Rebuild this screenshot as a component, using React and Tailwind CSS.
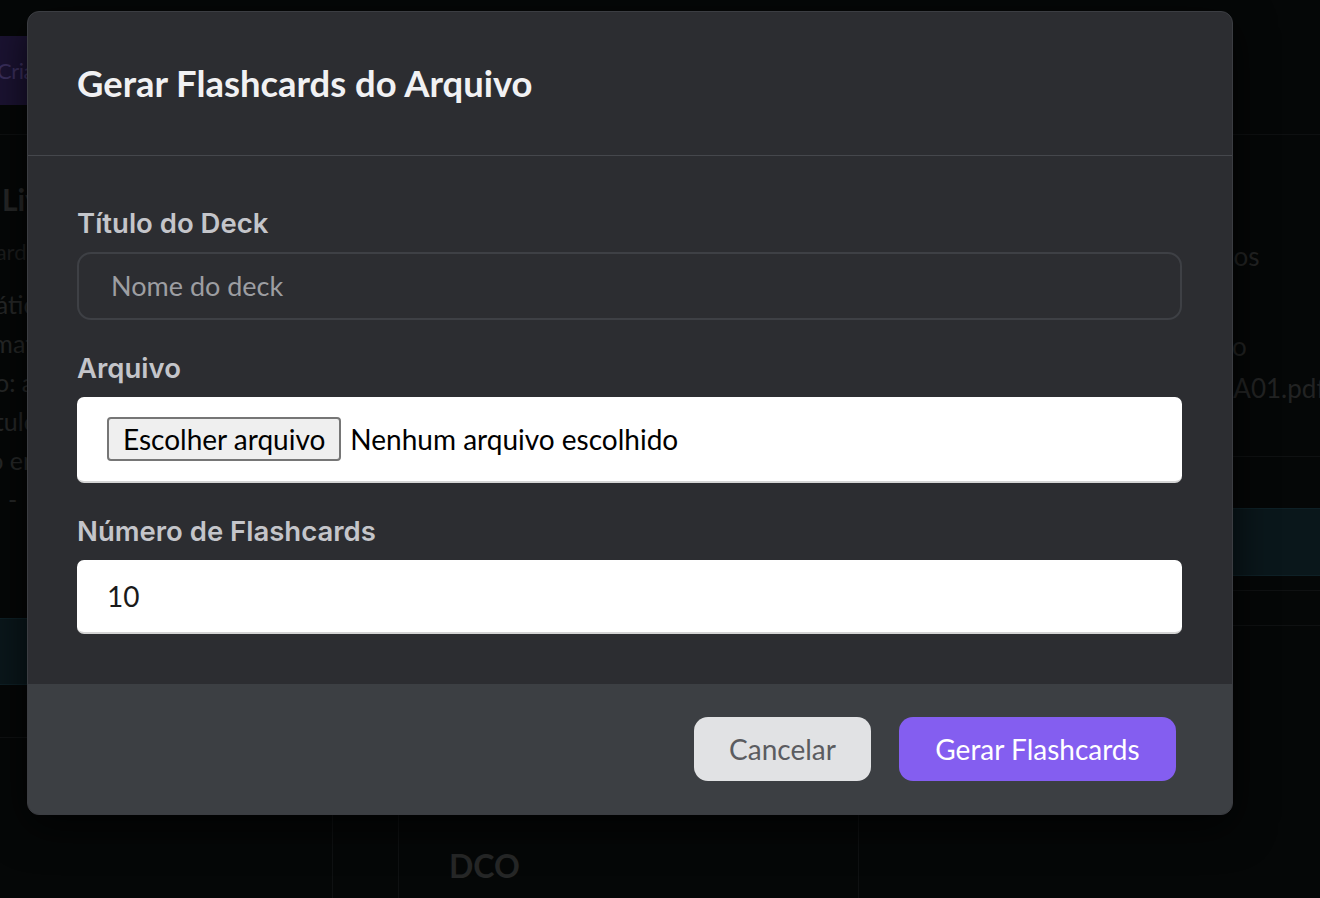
import React from "react";

const lato = { fontFamily: "Lato, 'Liberation Sans', sans-serif" };
const inter = { fontFamily: "Inter, 'Liberation Sans', sans-serif" };

function Label({ children }) {
  return (
    <div className="mb-[13px] text-[27.5px] font-semibold leading-[32px] text-[#c4c5ca]" style={inter}>
      {children}
    </div>
  );
}

function Background() {
  return (
    <div className="flex h-[898px] w-[1320px] flex-col bg-[#050707]" style={lato}>
      {/* top bar */}
      <div className="flex h-[135px] shrink-0 items-start border-b border-[#0e1011] pt-[36px]">
        <div className="ml-[-38px] flex h-[69px] items-center whitespace-nowrap rounded-lg bg-[#1b1332] px-[35px] text-[22px] tracking-[-0.5px] text-[#3a2f5c]">
          Criar Deck
        </div>
      </div>
      {/* middle */}
      <div className="flex h-[610px] shrink-0">
        <div className="w-[27px] shrink-0 pt-[46px] text-[#262727]">
          <div className="ml-[2px] whitespace-nowrap text-[30px] font-bold leading-[36px]">Livro de Matemática</div>
          <div className="ml-[-46px] mt-[20px] whitespace-nowrap text-[22px] leading-[30px] text-[#1c1d1d]">10 cards · criado</div>
          <div className="mt-[18px] flex flex-col text-[25px] leading-[39px]">
            <span className="ml-[-82px] whitespace-nowrap">Matemática</span>
            <span className="ml-[-44px] whitespace-nowrap">Formato PDF</span>
            <span className="ml-[-77px] whitespace-nowrap">Arquivo: aula</span>
            <span className="ml-[-25px] whitespace-nowrap">Título</span>
            <span className="ml-[-69px] whitespace-nowrap">Criado em</span>
            <span className="ml-[8px] whitespace-nowrap">-</span>
          </div>
          <div className="ml-[-40px] mt-[99px] h-[67px] w-[120px] border-y border-[#0e2026] bg-[#0a171b]" />
          <div className="mt-[52px] h-px w-[40px] bg-[#0f1112]" />
        </div>
        <div className="flex-1" />
        <div className="w-[88px] shrink-0 border-l border-[#0c0e0f] pt-[103px] text-[26px] text-[#222323]">
          <div className="ml-[-14px] whitespace-nowrap leading-[36px]">dos</div>
          <div className="ml-[-14px] mt-[54px] whitespace-nowrap leading-[36px]">vo</div>
          <div className="ml-[-13px] mt-[4px] whitespace-nowrap leading-[40px]">LA01.pdf</div>
          <div className="mt-[48px] h-px w-full bg-[#0f1112]" />
          <div className="mt-[51px] h-[68px] w-full border-y border-[#0e2026] bg-[#0a171b]" />
          <div className="mt-[14px] h-px w-full bg-[#0f1112]" />
          <div className="mt-[34px] h-px w-full bg-[#0f1112]" />
        </div>
      </div>
      {/* bottom row */}
      <div className="flex flex-1 items-stretch">
        <div className="flex w-[333px] shrink-0 items-center border-r border-[#0f1112] pt-[88px] text-[30px] font-bold text-[#262727]">
          <span className="ml-[-8px]">!</span>
        </div>
        <div className="w-[65px] shrink-0" />
        <div className="flex w-[461px] shrink-0 items-center border-x border-[#0f1112] pl-[50px] pt-[88px] text-[32px] font-bold text-[#262727]">
          DCO
        </div>
        <div className="flex-1" />
      </div>
    </div>
  );
}

export default function App() {
  return (
    <div className="relative h-[898px] w-[1320px] overflow-hidden">
      <Background />
      <div className="absolute left-[27px] top-[11px] w-[1206px] overflow-hidden rounded-[12px] border border-[#3b3d42] bg-[#2c2d31] shadow-[0_12px_40px_rgba(0,0,0,0.7)]">
        <div className="flex h-[144px] items-center border-b border-[#45474c] pl-[49px]">
          <h2 className="text-[36.4px] font-bold text-[#f1f1f3]" style={lato}>
            Gerar Flashcards do Arquivo
          </h2>
        </div>
        <div className="pb-[50px] pl-[49px] pr-[50px] pt-[51px]">
          <Label>Título do Deck</Label>
          <div
            className="flex h-[68px] items-center rounded-[14px] border-2 border-[#3e4045] pl-[32px] text-[27px] text-[#9d9ea2]"
            style={lato}
          >
            Nome do deck
          </div>

          <div className="mt-[32px]">
            <Label>Arquivo</Label>
            <div
              className="flex h-[86px] items-center rounded-[7px] border-b-2 border-[#d4d4d4] bg-white pl-[30px] text-[28px] text-black"
              style={lato}
            >
              <span className="flex h-[44px] items-center rounded-[4px] border-2 border-[#767676] bg-[#efefef] px-[14px]">
                Escolher arquivo
              </span>
              <span className="ml-[9px]">Nenhum arquivo escolhido</span>
            </div>
          </div>

          <div className="mt-[32px]">
            <Label>Número de Flashcards</Label>
            <div
              className="flex h-[74px] items-center rounded-[7px] border-b-2 border-[#d4d4d4] bg-white pl-[30px] text-[28px] text-[#1a1a1a]"
              style={lato}
            >
              10
            </div>
          </div>
        </div>
        <div className="flex h-[130px] items-center justify-end gap-[28px] bg-[#3c3f43] pr-[56px]" style={lato}>
          <button className="flex h-[64px] w-[177px] items-center justify-center rounded-[14px] bg-[#e1e2e4] text-[28px] text-[#5b5c60]">
            Cancelar
          </button>
          <button className="flex h-[64px] w-[277px] items-center justify-center rounded-[14px] bg-[#845ef0] text-[28px] text-white">
            Gerar Flashcards
          </button>
        </div>
      </div>
    </div>
  );
}
